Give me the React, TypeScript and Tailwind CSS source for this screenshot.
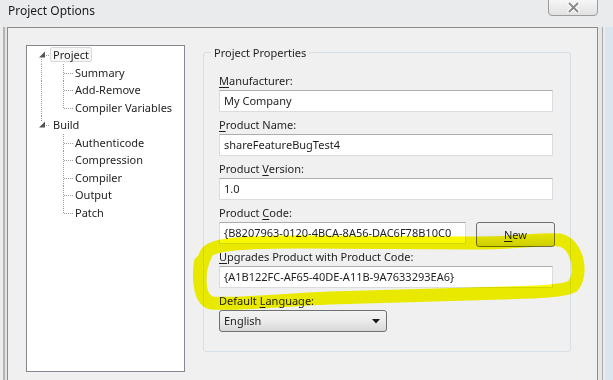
import React from 'react';

type TreeNode = { label: string; children: string[] };

const tree: TreeNode[] = [
  { label: 'Project', children: ['Summary', 'Add-Remove', 'Compiler Variables'] },
  { label: 'Build', children: ['Authenticode', 'Compression', 'Compiler', 'Output', 'Patch'] },
];

function Dotted({ x1, y1, x2, y2 }: { x1: number; y1: number; x2: number; y2: number }) {
  return <line x1={x1} y1={y1} x2={x2} y2={y2} stroke="#9a9a9a" strokeWidth={1} strokeDasharray="1 1" />;
}

function ParentRow({ label, first, selected }: { label: string; first: boolean; selected?: boolean }) {
  return (
    <div className="flex items-center h-[17.5px]">
      <svg width="23" height="17.5" viewBox="0 0 23 17.5" className="shrink-0">
        {first ? <Dotted x1={14.5} y1={13} x2={14.5} y2={17.5} /> : <Dotted x1={14.5} y1={0} x2={14.5} y2={5} />}
        <polygon points="18,5.5 18,11.5 12,11.5" fill="#555555" />
        <Dotted x1={19} y1={9.5} x2={23} y2={9.5} />
      </svg>
      <span
        className={
          'h-[15px] px-[2px] leading-[13px] border rounded-[2px] ' +
          (selected ? 'border-[#d9d9d9] bg-[#f7f7f7]' : 'border-transparent')
        }
      >
        {label}
      </span>
    </div>
  );
}

function ChildRow({ label, last, parentContinues }: { label: string; last: boolean; parentContinues: boolean }) {
  return (
    <div className="flex items-center h-[17.5px]">
      <svg width="48" height="17.5" viewBox="0 0 48 17.5" className="shrink-0">
        {parentContinues && <Dotted x1={14.5} y1={0} x2={14.5} y2={17.5} />}
        <Dotted x1={36.5} y1={0} x2={36.5} y2={last ? 9.5 : 17.5} />
        <Dotted x1={37} y1={9.5} x2={46} y2={9.5} />
      </svg>
      <span className="leading-[15px]">{label}</span>
    </div>
  );
}

function Label({ pre, key1, post }: { pre?: string; key1: string; post: string }) {
  return (
    <div className="h-[17px] leading-[17px] mb-[1px] whitespace-nowrap">
      {pre}
      <span className="underline underline-offset-[2px]">{key1}</span>
      {post}
    </div>
  );
}

function TextBox({ value, className }: { value: string; className?: string }) {
  return (
    <div
      className={
        'h-[22px] bg-white border border-[#d9dde2] border-t-[#abadb3] pl-[4px] leading-[20px] overflow-hidden whitespace-nowrap ' +
        (className ?? 'w-[334px]')
      }
    >
      {value}
    </div>
  );
}

export default function App() {
  return (
    <div className="relative w-[613px] h-[380px] overflow-hidden bg-[#e9ebed] font-['Noto_Sans',sans-serif] text-[11px] text-[#1e1e1e]">
      {/* title bar */}
      <div className="flex items-start h-[27px]">
        <div className="pl-[8px] pt-[2px] text-[12px] leading-[17px] text-[#1a1a1a]">Project Options</div>
        <div className="ml-auto mr-[15px] -mt-px w-[50px] h-[17px] rounded-b-[4px] border border-[#9c9c9c] bg-gradient-to-b from-[#f6f6f6] to-[#e1e1e1] flex items-center justify-center">
          <svg width="13" height="11" viewBox="0 0 13 11">
            <path d="M2.5 1.5 L10.5 9.5 M10.5 1.5 L2.5 9.5" stroke="#ffffff" strokeWidth={4} strokeLinecap="round" />
            <path d="M2.5 1.5 L10.5 9.5 M10.5 1.5 L2.5 9.5" stroke="#8a8a8a" strokeWidth={2} strokeLinecap="round" />
          </svg>
        </div>
      </div>

      <div className="flex h-[353px]">
        {/* left frame */}
        <div className="w-[7px] flex">
          <div className="w-[3px] bg-[#ececec]" />
          <div className="w-[2px] bg-[#b4b4b4]" />
          <div className="w-[2px] bg-[#e4e4e4]" />
        </div>

        {/* client area */}
        <div className="w-[591px] border-l border-t border-r border-[#8c8c8c] bg-[#f0f0f0] flex gap-[18px] pl-[18px] pt-[17px]">
          {/* tree */}
          <div className="w-[159px] h-[327px] border border-[#828790] bg-white">
            {tree.map((node, i) => (
              <div key={node.label}>
                <ParentRow label={node.label} first={i === 0} selected={i === 0} />
                {node.children.map((c, j) => (
                  <ChildRow
                    key={c}
                    label={c}
                    last={j === node.children.length - 1}
                    parentContinues={i < tree.length - 1}
                  />
                ))}
              </div>
            ))}
          </div>

          {/* group box */}
          <fieldset className="w-[367px] h-[307px] border border-[#d5dfe5] rounded-[3px]">
            <legend className="ml-[7px] px-[3px] leading-[15px]">Project Properties</legend>
            <div className="mt-[12px] px-[15px] flex flex-col">
              <div className="mb-[4px]">
                <Label key1="M" post="anufacturer:" />
                <TextBox value="My Company" />
              </div>
              <div className="mb-[4px]">
                <Label key1="P" post="roduct Name:" />
                <TextBox value="shareFeatureBugTest4" />
              </div>
              <div className="mb-[4px]">
                <Label pre="Product " key1="V" post="ersion:" />
                <TextBox value="1.0" />
              </div>
              <div className="mb-[4px]">
                <Label pre="Product " key1="C" post="ode:" />
                <div className="flex items-start h-[22px]">
                  <TextBox value="{B8207963-0120-4BCA-8A56-DAC6F78B10C0" className="w-[247px]" />
                  <button className="ml-[10px] w-[79px] h-[25px] rounded-[3px] border border-[#707070] bg-gradient-to-b from-[#f2f2f2] via-[#ebebeb] to-[#d4d4d4] leading-[23px]">
                    <span className="underline underline-offset-[2px]">N</span>ew
                  </button>
                </div>
              </div>
              <div className="mb-[4px]">
                <Label key1="U" post="pgrades Product with Product Code:" />
                <TextBox value="{A1B122FC-AF65-40DE-A11B-9A7633293EA6}" />
              </div>
              <div>
                <Label pre="Default " key1="L" post="anguage:" />
                <div className="w-[168px] h-[22px] rounded-[3px] border border-[#707070] bg-gradient-to-b from-[#f3f3f3] via-[#ebebeb] to-[#d8d8d8] flex items-center pl-[4px] pr-[6px]">
                  <span className="flex-1">English</span>
                  <svg width="8" height="5" viewBox="0 0 8 5">
                    <polygon points="0,0 8,0 4,4.5" fill="#1a1a1a" />
                  </svg>
                </div>
              </div>
            </div>
          </fieldset>
        </div>

        {/* right frame */}
        <div className="w-[15px] flex">
          <div className="w-[4px] bg-[#e6e6e6]" />
          <div className="w-[1px] bg-[#a8a8a8]" />
          <div className="w-[2px] bg-[#ececec]" />
          <div className="flex-1 bg-[#dbe5ee]" />
        </div>
      </div>

      {/* highlighter scribble */}
      <svg
        className="absolute inset-0 pointer-events-none mix-blend-multiply"
        width="613"
        height="380"
        viewBox="0 0 613 380"
      >
        <path
          d="M 206 254 C 210 244, 240 242, 300 242 L 470 243 C 510 244, 540 238, 560 240 C 578 244, 583 274, 573 286 C 562 293, 520 292, 470 294 L 330 298 C 280 300, 232 305, 211 303 C 198 300, 197 272, 206 254"
          fill="none"
          stroke="#f8f800"
          strokeWidth={13}
          strokeLinecap="round"
          strokeLinejoin="round"
        />
        <path d="M 200 262 C 197 280, 200 296, 210 302" fill="none" stroke="#f8f800" strokeWidth={12} strokeLinecap="round" />
      </svg>
    </div>
  );
}
